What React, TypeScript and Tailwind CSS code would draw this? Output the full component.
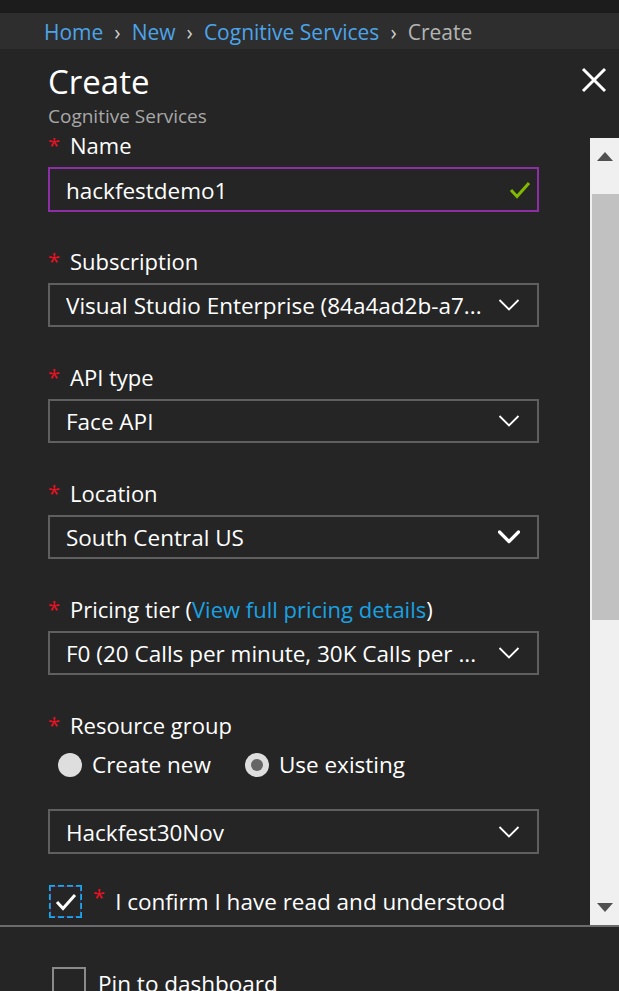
const Chevron = ({ bold = false }: { bold?: boolean }) => (
  <svg width="22" height="14" viewBox="0 0 22 14" fill="none">
    <path
      d="M1.5 2 L11 11.5 L20.5 2"
      stroke="#ffffff"
      strokeWidth={bold ? 3.2 : 1.8}
      strokeLinecap={bold ? "round" : "butt"}
      strokeLinejoin={bold ? "round" : "miter"}
    />
  </svg>
)

const Label = ({ children }: { children: React.ReactNode }) => (
  <div className="flex h-[28px] items-center text-[22px] text-white">
    <span className="w-[22px] self-start text-[22px] leading-[26px] text-[#e81123]">*</span>
    <span>{children}</span>
  </div>
)

const Select = ({ value, bold = false }: { value: string; bold?: boolean }) => (
  <div className="mt-[8px] flex h-[44px] items-center border-2 border-[#5f5f5f] pl-[16px] pr-[16px] text-[22.5px] text-white">
    <span className="flex-1 truncate pt-[2px]">{value}</span>
    <span className="ml-3 flex w-[24px] justify-center">
      <Chevron bold={bold} />
    </span>
  </div>
)

const Radio = ({ label, checked }: { label: string; checked?: boolean }) => (
  <div className="flex items-center">
    <span className="flex h-[24px] w-[24px] items-center justify-center rounded-full bg-[#dedede]">
      {checked && <span className="h-[12px] w-[12px] rounded-full bg-[#666666]" />}
    </span>
    <span className="ml-[10px] text-[22.5px] text-white">{label}</span>
  </div>
)

export default function App() {
  return (
    <div
      className="h-[991px] w-[619px] overflow-hidden bg-[#252525]"
      style={{ fontFamily: '"Open Sans", "Noto Sans", sans-serif' }}
    >
      <div className="h-[13px] bg-[#1c1c1c]" />
      <div className="flex h-[36px] items-center bg-[#2e2e2e] pl-[44px] pt-[3px] text-[21px]">
        <span className="text-[#4ca4ea]">Home</span>
        <span className="mx-[11px] text-[#cfcfcf]">›</span>
        <span className="text-[#4ca4ea]">New</span>
        <span className="mx-[11px] text-[#cfcfcf]">›</span>
        <span className="text-[#4ca4ea]">Cognitive Services</span>
        <span className="mx-[11px] text-[#cfcfcf]">›</span>
        <span className="text-[#b4b4b4]">Create</span>
      </div>

      <div className="relative h-[89px] pl-[48px]">
        <div className="pt-[11px] text-[33px] leading-[44px] text-white">Create</div>
        <div className="mt-[1px] text-[19px] leading-[22px] text-[#a8a8a8]">Cognitive Services</div>
        <button className="absolute right-[12px] top-[18px]">
          <svg width="26" height="26" viewBox="0 0 26 26">
            <path d="M2 2 L24 24 M24 2 L2 24" stroke="#ffffff" strokeWidth="3" />
          </svg>
        </button>
      </div>

      <div className="flex h-[787px]">
        <div className="flex-1 overflow-hidden">
          <div className="-mt-[7px] pl-[48px] pr-[51px]">
            <Label>Name</Label>
            <div className="mt-[8px] flex h-[45px] items-center border-2 border-[#8c2ea6] pl-[16px] pr-[6px] text-[22.5px] text-white">
              <span className="flex-1 pt-[2px]">hackfestdemo1</span>
              <svg width="22" height="18" viewBox="0 0 22 18" fill="none">
                <path d="M2 9 L8 15.5 L20 2" stroke="#7fba00" strokeWidth="3" />
              </svg>
            </div>

            <div className="mt-[35px]">
              <Label>Subscription</Label>
              <Select value="Visual Studio Enterprise (84a4ad2b-a7..." />
            </div>

            <div className="mt-[36px]">
              <Label>API type</Label>
              <Select value="Face API" />
            </div>

            <div className="mt-[36px]">
              <Label>Location</Label>
              <Select value="South Central US" bold />
            </div>

            <div className="mt-[36px]">
              <Label>
                Pricing tier (<span className="text-[#1aa1e1]">View full pricing details</span>)
              </Label>
              <Select value="F0 (20 Calls per minute, 30K Calls per ..." />
            </div>

            <div className="mt-[36px]">
              <Label>Resource group</Label>
              <div className="mt-[12px] flex h-[28px] items-center gap-[34px] pl-[10px]">
                <Radio label="Create new" />
                <Radio label="Use existing" checked />
              </div>
              <div className="mt-[30px] flex h-[45px] items-center border-2 border-[#5f5f5f] pl-[16px] pr-[16px] text-[22.5px] text-white">
                <span className="flex-1 pt-[2px]">Hackfest30Nov</span>
                <span className="flex w-[24px] justify-center">
                  <Chevron />
                </span>
              </div>
            </div>

            <div className="mt-[31px] flex items-center pl-[1px]">
              <span className="flex h-[33px] w-[33px] items-center justify-center border-2 border-dashed border-[#00b4f0] outline outline-1 -outline-offset-2 outline-[#8c2ea6]/40">
                <svg width="22" height="18" viewBox="0 0 22 18" fill="none">
                  <path d="M2 9 L8 15.5 L20 2" stroke="#ffffff" strokeWidth="3" />
                </svg>
              </span>
              <span className="ml-[11px] self-start text-[22px] leading-[22px] text-[#e81123]">*</span>
              <span className="ml-[10px] text-[22.5px] text-white">I confirm I have read and understood</span>
            </div>
          </div>
        </div>

        <div className="flex w-[29px] flex-col bg-[#f0f0f0] pt-[1px]">
          <div className="flex h-[36px] items-start justify-center pt-[13px]">
            <svg width="16" height="9" viewBox="0 0 16 9">
              <path d="M0 9 L8 0 L16 9 Z" fill="#505050" />
            </svg>
          </div>
          <div className="h-[19px]" />
          <div className="ml-[2px] h-[426px] bg-[#c1c1c1]" />
          <div className="flex-1" />
          <div className="flex h-[36px] items-end justify-center pb-[13px]">
            <svg width="16" height="9" viewBox="0 0 16 9">
              <path d="M0 0 L16 0 L8 9 Z" fill="#505050" />
            </svg>
          </div>
        </div>
      </div>

      <div className="border-t-2 border-[#6b6b6b] pl-[52px] pt-[40px]">
        <div className="flex items-center">
          <span className="h-[34px] w-[34px] border-2 border-[#8a8a8a]" />
          <span className="ml-[12px] text-[22.5px] text-white">Pin to dashboard</span>
        </div>
      </div>
    </div>
  )
}
